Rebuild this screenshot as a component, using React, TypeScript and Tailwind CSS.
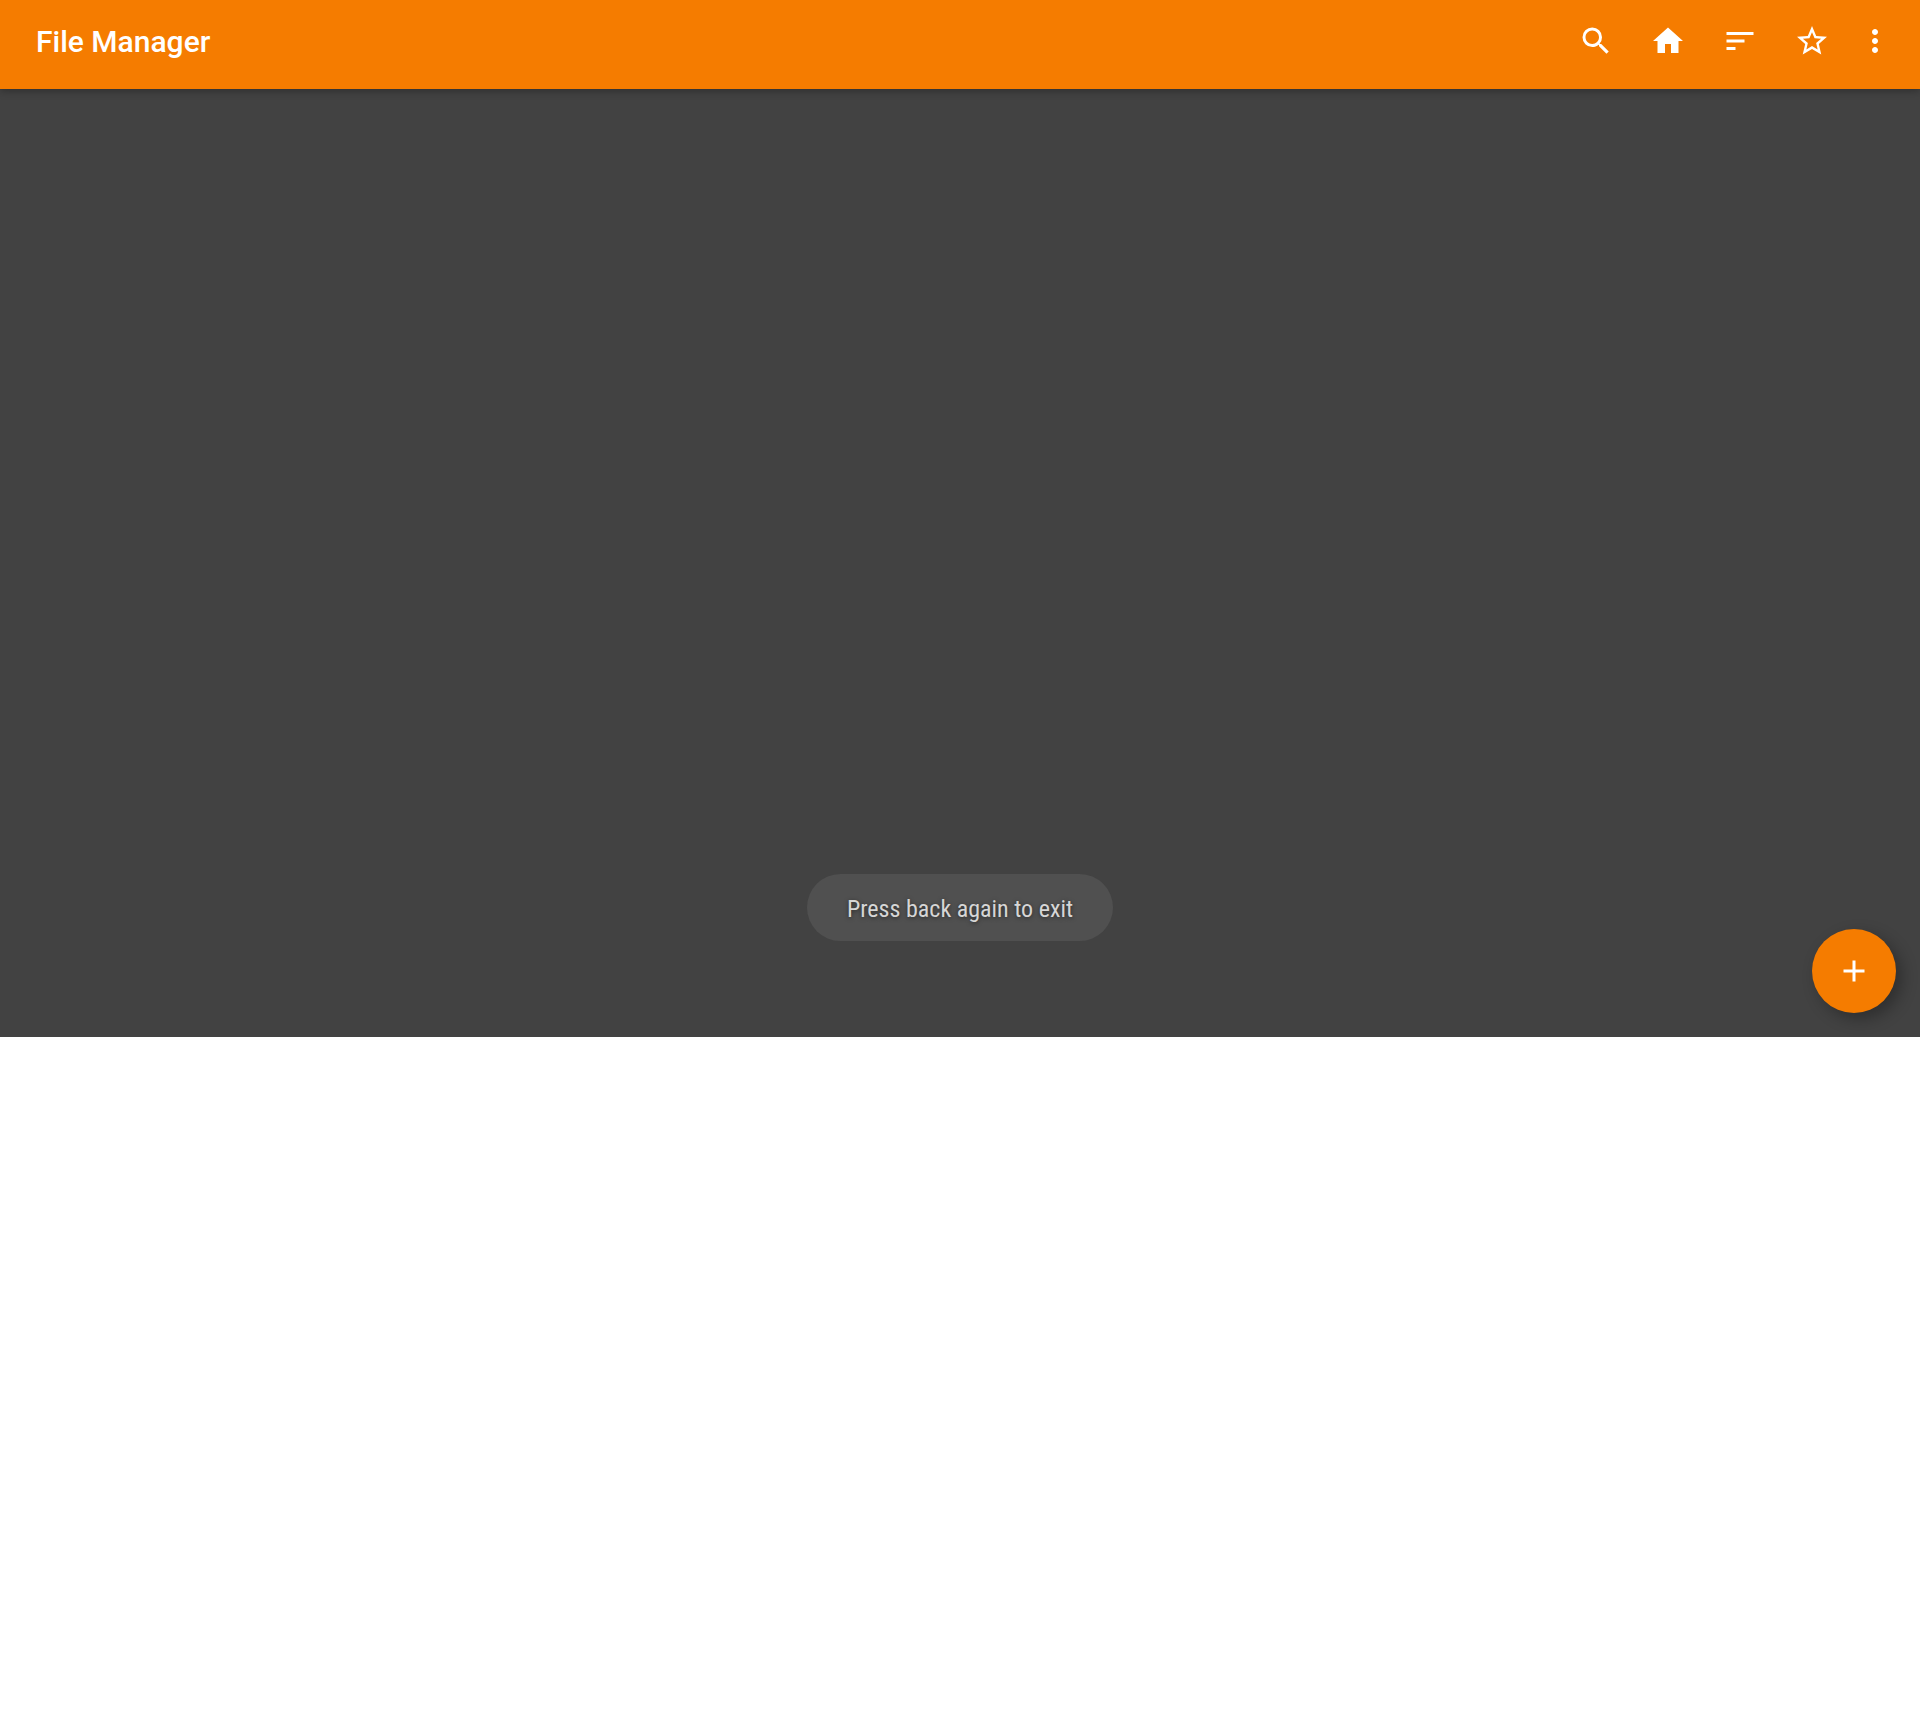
import type { ReactNode } from "react";

function Icon({ children }: { children: ReactNode }) {
  return (
    <svg viewBox="0 0 24 24" className="size-9 shrink-0" fill="currentColor" aria-hidden="true">
      {children}
    </svg>
  );
}

const actions = [
  {
    label: "Search",
    path: "M15.5 14h-.79l-.28-.27A6.471 6.471 0 0 0 16 9.5 6.5 6.5 0 1 0 9.5 16c1.61 0 3.09-.59 4.23-1.57l.27.28v.79l5 4.99L20.49 19l-4.99-5zm-6 0C7.01 14 5 11.99 5 9.5S7.01 5 9.5 5 14 7.01 14 9.5 11.99 14 9.5 14z",
  },
  { label: "Home", path: "M10 20v-6h4v6h5v-8h3L12 3 2 12h3v8z" },
  { label: "Sort", path: "M3 18h6v-2H3v2zM3 6v2h18V6H3zm0 7h12v-2H3v2z" },
  {
    label: "Favorites",
    path: "M22 9.24l-7.19-.62L12 2 9.19 8.63 2 9.24l5.46 4.73L5.82 21 12 17.27 18.18 21l-1.63-7.03L22 9.24zM12 15.4l-3.76 2.27 1-4.28-3.32-2.88 4.38-.38L12 6.1l1.71 4.04 4.38.38-3.32 2.88 1 4.28L12 15.4z",
  },
];

export default function App() {
  return (
    <div className="bg-white font-['Roboto',sans-serif]">
      <header className="relative z-10 flex h-[89px] items-start justify-between bg-[#f57c00] pr-[18px] pl-9 text-white shadow-[0_2px_8px_rgba(0,0,0,0.3)]">
        <h1 className="pt-6 text-[30px] leading-9 font-medium">File Manager</h1>
        <nav className="flex pt-[23px]" aria-label="Toolbar">
          {actions.map((action) => (
            <button key={action.label} type="button" aria-label={action.label} className="flex w-[72px] justify-center">
              <Icon>
                <path d={action.path} />
              </Icon>
            </button>
          ))}
          <button type="button" aria-label="More options" className="flex w-[54px] justify-center">
            <Icon>
              <path d="M12 8c1.1 0 2-.9 2-2s-.9-2-2-2-2 .9-2 2 .9 2 2 2zm0 2c-1.1 0-2 .9-2 2s.9 2 2 2 2-.9 2-2-.9-2-2-2zm0 6c-1.1 0-2 .9-2 2s.9 2 2 2 2-.9 2-2-.9-2-2-2z" />
            </Icon>
          </button>
        </nav>
      </header>
      <main className="relative flex min-h-[948px] items-end justify-center overflow-hidden bg-[#424242] pb-24">
        <div
          role="status"
          className="flex h-[67px] items-center rounded-full bg-[#505050] px-10 pt-0.5 font-['Roboto_Condensed','Roboto',sans-serif] text-2xl text-[#d6d6d6] [text-shadow:0_1px_4px_rgba(0,0,0,0.5)]"
        >
          Press back again to exit
        </div>
        <button
          type="button"
          aria-label="Add"
          className="absolute right-6 bottom-6 flex size-[84px] items-center justify-center rounded-full bg-[#f57c00] text-white shadow-[6px_6px_16px_rgba(0,0,0,0.3)]"
        >
          <Icon>
            <path d="M19 13h-6v6h-2v-6H5v-2h6V5h2v6h6v2z" />
          </Icon>
        </button>
      </main>
    </div>
  );
}
